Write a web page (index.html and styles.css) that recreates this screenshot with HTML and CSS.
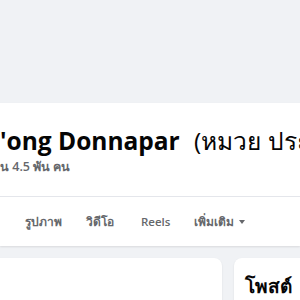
FILE: index.html
```html
<!DOCTYPE html>
<html lang="th">

<head>
    <meta charset="UTF-8">
    <meta name="viewport" content="width=device-width, initial-scale=1.0">
    <title>Donnapar</title>
    <link rel="stylesheet" href="styles.css">
</head>

<body>
    <div class="cover"></div>
    <div class="header">
        <div class="info">
            <h1 class="name">'ong Donnapar <span class="alt">(หมวย ประมาณ)</span></h1>
            <div class="friends">น 4.5 พัน คน</div>
        </div>
        <div class="tabs">
            <span class="tab">รูปภาพ</span>
            <span class="tab">วิดีโอ</span>
            <span class="tab">Reels</span>
            <span class="tab">เพิ่มเติม <span class="caret"></span></span>
        </div>
    </div>
    <div class="content">
        <div class="card left"></div>
        <div class="card right">
            <h2>โพสต์</h2>
        </div>
    </div>
</body>

</html>
```

FILE: styles.css
```css
* {
    box-sizing: border-box;
}

body {
    margin: 0;
    background: #f0f2f5;
    font-family: "Open Sans", "Noto Sans", sans-serif;
    color: #050505;
    overflow: hidden;
    height: 300px;
}

.cover {
    height: 103px;
}

.header {
    background: #fff;
    box-shadow: 0 1px 2px rgba(0, 0, 0, 0.1);
}

.info {
    padding: 23px 0 0 0;
    height: 94px;
    border-bottom: 1px solid #e4e6eb;
}

.name {
    margin: 0;
    font-size: 24.5px;
    font-weight: 700;
    line-height: 30px;
    white-space: nowrap;
    overflow: hidden;
}

.alt {
    font-weight: 400;
    margin-left: 8px;
}

.friends {
    font-size: 12.5px;
    font-weight: 600;
    color: #65676b;
    line-height: 18px;
    margin-top: 2px;
}

.tabs {
    display: flex;
    align-items: center;
    height: 49px;
    padding-left: 25px;
    gap: 24px;
}

.tab {
    font-size: 12px;
    font-weight: 600;
    color: #65676b;
    display: flex;
    align-items: center;
    gap: 5px;
}

.tab:nth-child(3) {
    font-size: 11.5px;
    margin-left: 3px;
}

.caret {
    width: 0;
    height: 0;
    border-left: 3.5px solid transparent;
    border-right: 3.5px solid transparent;
    border-top: 4px solid #65676b;
}

.content {
    display: flex;
    gap: 12px;
    padding-top: 12px;
}

.card {
    background: #fff;
    border-radius: 8px;
    height: 100px;
    box-shadow: 0 1px 2px rgba(0, 0, 0, 0.1);
}

.left {
    width: 232px;
    margin-left: -10px;
    flex: none;
}

.right {
    flex: 1;
    margin-right: -20px;
    padding: 16px 11px;
}

.right h2 {
    margin: 0;
    font-size: 19px;
    font-weight: 700;
    line-height: 24px;
}
```
